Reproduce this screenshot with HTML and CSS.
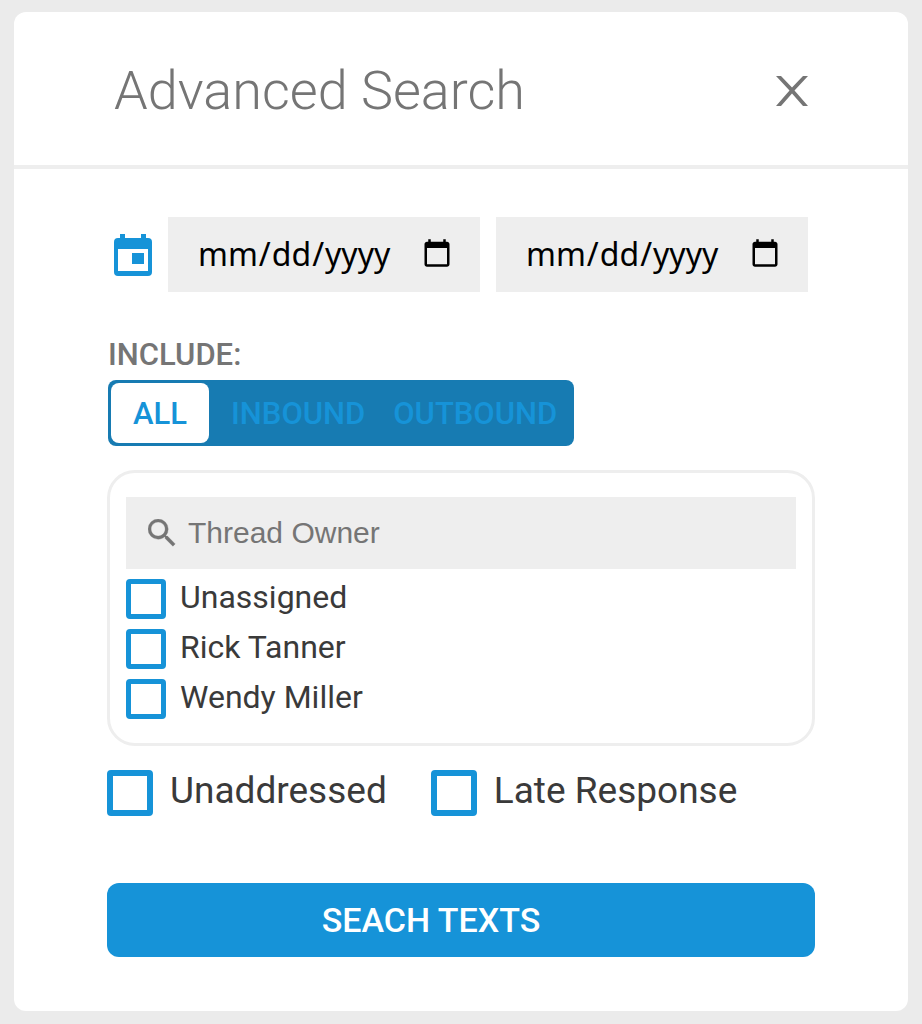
FILE: index.html
```html
<!DOCTYPE html>
<html lang="en">
    <head>
        <meta charset="utf-8">
        <meta name="viewport" content="width=device-width, initial-scale=1">
        <title>Advanced Search</title>
        <link rel="stylesheet" href="styles.css">
    </head>

    <body>
        <main class="modal">
            <header class="modal-header">
                <h1>Advanced Search</h1>
                <button type="button" class="close-button" aria-label="Close">
                    <svg viewBox="0 0 32 30"><path d="M0 0h5l11 11.5L27 0h5L18.500 14.500 32 30h-5L16 17.500 5 30H0l13.500-15.500z"/></svg>
                </button>
            </header>

            <form class="search-form" onsubmit="return false;">
                <div class="date-row">
                    <svg class="calendar-icon" viewBox="0 0 38 42">
                        <path fill-rule="evenodd" d="M6 0h5v4h16V0h5v4h2a4 4 0 0 1 4 4v30a4 4 0 0 1-4 4H4a4 4 0 0 1-4-4V8a4 4 0 0 1 4-4h2zM4 15v22h30V15zM18 19h12v11H18z"/>
                    </svg>
                    <input type="date" name="startDate" aria-label="Start date">
                    <input type="date" name="endDate" aria-label="End date">
                </div>

                <fieldset class="include">
                    <legend>INCLUDE:</legend>
                    <div class="segments">
                        <label><input type="radio" name="direction" value="all" checked>ALL</label>
                        <label><input type="radio" name="direction" value="inbound">INBOUND</label>
                        <label><input type="radio" name="direction" value="outbound">OUTBOUND</label>
                    </div>
                </fieldset>

                <div class="owner-box">
                    <div class="owner-search">
                        <svg class="search-icon" viewBox="3 3 18 18">
                            <path stroke-width="0.2" d="M15.500 14h-.79l-.28-.27A6.471 6.471 0 0 0 16 9.500 6.500 6.500 0 1 0 9.500 16c1.610 0 3.090-.59 4.230-1.570l.27.28v.79l5 4.990L20.490 19l-4.990-5zm-6 0C7.010 14 5 11.990 5 9.500S7.010 5 9.500 5 14 7.010 14 9.500 11.990 14 9.500 14z"/>
                        </svg>
                        <input type="text" name="owner" placeholder="Thread Owner" aria-label="Thread Owner">
                    </div>
                    <label class="owner"><input type="checkbox" name="unassigned"><span>Unassigned</span></label>
                    <label class="owner"><input type="checkbox" name="rickTanner"><span>Rick Tanner</span></label>
                    <label class="owner"><input type="checkbox" name="wendyMiller"><span>Wendy Miller</span></label>
                </div>

                <div class="flags">
                    <label><input type="checkbox" name="unaddressed"><span>Unaddressed</span></label>
                    <label><input type="checkbox" name="lateResponse"><span>Late Response</span></label>
                </div>

                <button type="submit" class="submit-button">SEACH TEXTS</button>
            </form>
        </main>
    </body>
</html>
```
FILE: styles.css
```css
* {
    box-sizing: border-box;
}

body {
    margin: 0;
    padding: 12px 14px;
    background-color: #ebebeb;
    color: #3a3a3a;
    font-family: Roboto, sans-serif;
}

.modal {
    background-color: #fff;
    border-radius: 12px;
}

.modal-header {
    display: flex;
    align-items: center;
    justify-content: space-between;
    padding: 46px 100px 41px;
    border-bottom: 4px solid #eee;
}

h1 {
    margin: 0;
    font-size: 54px;
    line-height: 66px;
    font-weight: 300;
    color: #757575;
}

.close-button {
    display: flex;
    padding: 0;
    border: none;
    background: none;
    cursor: pointer;
}

.close-button svg {
    width: 32px;
    height: 30px;
    fill: #757575;
}

.search-form {
    padding: 48px 93px 54px;
}

.date-row {
    display: flex;
    align-items: center;
    gap: 16px;
    padding: 0 7px;
}

.calendar-icon {
    flex: none;
    width: 38px;
    height: 42px;
    fill: #1693d8;
}

.date-row input {
    flex: 1;
    min-width: 0;
    height: 75px;
    padding: 0 25px 2px 29px;
    border: none;
    background-color: #eee;
    color: #000;
    font-family: "Noto Sans", sans-serif;
    font-size: 32px;
}

.include {
    margin: 43px 0 24px;
    padding: 0 1px;
    border: none;
}

legend {
    padding: 0;
    font-size: 31px;
    line-height: 40px;
    font-weight: 500;
    color: #757575;
}

.segments {
    display: inline-flex;
    vertical-align: top;
    height: 66px;
    margin-top: 5px;
    padding: 3px;
    border-radius: 8px;
    background-color: #177bb2;
}

.segments label {
    display: flex;
    align-items: center;
    padding: 0 14px;
    border-radius: 8px;
    color: #1693d8;
    font-size: 31px;
    font-weight: 500;
    cursor: pointer;
}

.segments label:has(input:checked) {
    margin-right: 8px;
    padding: 0 22px;
    background-color: #fff;
}

.segments input {
    appearance: none;
    width: 0;
    height: 0;
    margin: 0;
}

.owner-box {
    padding: 24px 16px 19px;
    border: 3px solid #eee;
    border-radius: 28px;
}

.owner-search {
    display: flex;
    align-items: center;
    gap: 12px;
    height: 72px;
    margin-bottom: 5px;
    padding: 0 22px;
    background-color: #eee;
}

.search-icon {
    flex: none;
    width: 28px;
    height: 28px;
    fill: #757575;
    stroke: #757575;
}

.owner-search input {
    flex: 1;
    min-width: 0;
    padding: 0;
    border: none;
    background: none;
    font-family: "Liberation Sans", Arial, sans-serif;
    font-size: 30px;
}

.owner-search input::placeholder {
    color: #757575;
}

.owner {
    display: flex;
    align-items: center;
    gap: 14px;
    height: 50px;
    font-size: 32px;
}

.owner span,
.flags span {
    padding-bottom: 4px;
}

input[type="checkbox"] {
    appearance: none;
    flex: none;
    width: 40px;
    height: 40px;
    margin: 0;
    border: 5px solid #1693d8;
    border-radius: 4px;
    cursor: pointer;
}

input[type="checkbox"]:checked {
    background-color: #1693d8;
}

.flags {
    display: flex;
    gap: 44px;
    margin: 23px 0 67px;
}

.flags label {
    display: flex;
    align-items: center;
    gap: 17px;
    font-size: 37px;
}

.flags input[type="checkbox"] {
    width: 46px;
    height: 46px;
    border-width: 6px;
}

.submit-button {
    display: block;
    width: 100%;
    height: 74px;
    padding: 0 60px 0 0;
    border: none;
    border-radius: 12px;
    background-color: #1693d8;
    color: #fff;
    font-family: Roboto, sans-serif;
    font-size: 34px;
    font-weight: 500;
    cursor: pointer;
}
```
